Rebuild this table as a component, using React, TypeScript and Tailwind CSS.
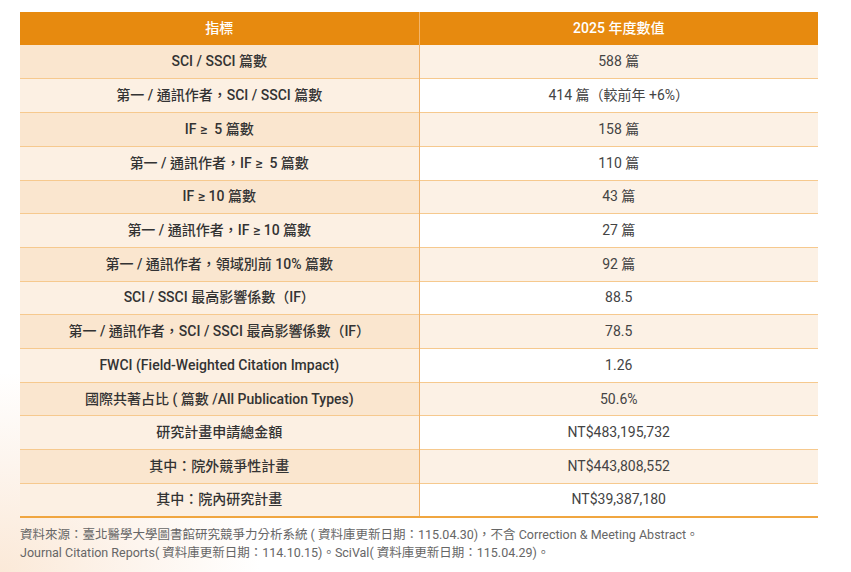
const rows: [string, string][] = [
  ["SCI / SSCI 篇數", "588 篇"],
  ["第一 / 通訊作者，SCI / SSCI 篇數", "414 篇（較前年 +6%）"],
  ["IF ≥ \u00a05 篇數", "158 篇"],
  ["第一 / 通訊作者，IF ≥ \u00a05 篇數", "110 篇"],
  ["IF ≥ 10 篇數", "43 篇"],
  ["第一 / 通訊作者，IF ≥ 10 篇數", "27 篇"],
  ["第一 / 通訊作者，領域別前 10% 篇數", "92 篇"],
  ["SCI / SSCI 最高影響係數（IF）", "88.5"],
  ["第一 / 通訊作者，SCI / SSCI 最高影響係數（IF）", "78.5"],
  ["FWCI (Field-Weighted Citation Impact)", "1.26"],
  ["國際共著占比 ( 篇數 /All Publication Types)", "50.6%"],
  ["研究計畫申請總金額", "NT$483,195,732"],
  ["其中：院外競爭性計畫", "NT$443,808,552"],
  ["其中：院內研究計畫", "NT$39,387,180"],
];

export default function App() {
  return (
    <div
      className="min-h-[572px] w-[851px] bg-[radial-gradient(ellipse_260px_200px_at_0%_100%,#fbe9d8_0%,#fdf5ee_55%,#ffffff_100%)] pt-3 text-[#333]"
      style={{ fontFamily: '"Roboto", "Noto Sans CJK TC", sans-serif' }}
    >
      <div className="ml-5 w-[798px]">
        <table className="w-full border-collapse text-center text-[14px]">
          <thead>
            <tr className="h-[33.3px] bg-[#e78a0f] text-white">
              <th className="w-1/2 border-r border-[#f3b56a] font-medium">指標</th>
              <th className="font-medium">2025 年度數值</th>
            </tr>
          </thead>
          <tbody>
            {rows.map(([label, value], i) => {
              const odd = i % 2 === 0;
              const last = i === rows.length - 1;
              return (
                <tr
                  key={label}
                  className={
                    last
                      ? "h-[33.7px] border-b-2 border-[#f0a640]"
                      : "h-[33.7px] border-b border-[#f6c98e]"
                  }
                >
                  <td
                    className={
                      odd
                        ? "border-r border-[#f1b36c] bg-[#fae6cf] font-medium"
                        : "border-r border-[#f1b36c] bg-[#fcf0e3] font-medium"
                    }
                  >
                    {label}
                  </td>
                  <td className={odd ? "bg-[#fcf1e5] text-[#444]" : "bg-white text-[#444]"}>{value}</td>
                </tr>
              );
            })}
          </tbody>
        </table>
        <div className="mt-2 text-[12.5px] leading-[18px] text-[#666]">
          <p>資料來源：臺北醫學大學圖書館研究競爭力分析系統 ( 資料庫更新日期：115.04.30)，不含 Correction &amp; Meeting Abstract。</p>
          <p>Journal Citation Reports( 資料庫更新日期：114.10.15)。SciVal( 資料庫更新日期：115.04.29)。</p>
        </div>
      </div>
    </div>
  );
}
